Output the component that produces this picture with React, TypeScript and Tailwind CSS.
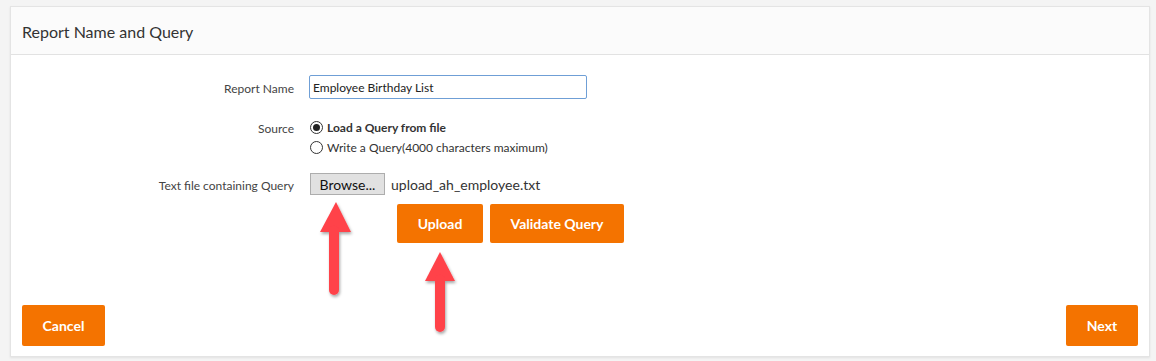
import React from "react";

function Radio({ checked }: { checked?: boolean }) {
  return (
    <span className="w-[13px] h-[13px] rounded-full border border-[#333] bg-white flex items-center justify-center shrink-0">
      {checked && <span className="w-[7px] h-[7px] rounded-full bg-[#222]" />}
    </span>
  );
}

export default function App() {
  return (
    <div
      className="relative min-h-screen h-[361px] bg-[#f4f4f4] pt-[6px] pl-[10px] overflow-hidden"
      style={{ fontFamily: "Lato, 'Open Sans', sans-serif" }}
    >
      <div className="w-[1140px] h-[351px] bg-white border border-[#e4e4e4] shadow-[0_1px_2px_rgba(0,0,0,0.08)] flex flex-col">
        <div className="h-[48px] bg-[#fbfbfb] border-b border-[#e2e2e2] flex items-center pl-[11px] pt-[3px] text-[16px] text-[#333]">
          Report Name and Query
        </div>
        <div className="flex-1 flex flex-col">
          <div className="flex items-center mt-[20px]">
            <div className="w-[283px] text-right text-[12px] text-[#444] pt-[4px]">Report Name</div>
            <div className="ml-[15px] w-[278px] h-[24px] border border-[#6f9fd6] rounded-[2px] flex items-center pl-[3px] pt-[2px] text-[12px] text-[#222]">
              Employee Birthday List
            </div>
          </div>
          <div className="flex mt-[18px]">
            <div className="w-[283px] text-right text-[12px] text-[#444] leading-[20px] pt-[2px]">Source</div>
            <div className="ml-[16px] flex flex-col text-[12px] text-[#333]">
              <label className="flex items-center gap-[4px] h-[20px] font-bold">
                <Radio checked />
                <span className="pt-[2px]">Load a Query from file</span>
              </label>
              <label className="flex items-center gap-[4px] h-[20px]">
                <Radio />
                <span className="pt-[2px]">Write a Query(4000 characters maximum)</span>
              </label>
            </div>
          </div>
          <div className="flex items-center mt-[16px]">
            <div className="w-[283px] text-right text-[12px] text-[#444] pt-[3px]">Text file containing Query</div>
            <div className="ml-[16px] w-[75px] h-[22px] bg-[#e1e1e1] border border-[#adadad] flex items-center justify-center pt-[1px] text-[14px] text-[#111]">
              Browse...
            </div>
            <span className="ml-[6px] text-[14px] text-[#333]">upload_ah_employee.txt</span>
          </div>
          <div className="flex mt-[9px] ml-[386px] gap-[7px]">
            <div className="w-[86px] h-[39px] bg-[#f47300] rounded-[2px] flex items-center justify-center text-white font-bold text-[14px]">
              Upload
            </div>
            <div className="w-[134px] h-[39px] bg-[#f47300] rounded-[2px] flex items-center justify-center text-white font-bold text-[14px]">
              Validate Query
            </div>
          </div>
          <div className="mt-auto flex justify-between pl-[11px] pr-[11px] pb-[10px]">
            <div className="w-[83px] h-[41px] bg-[#f47300] rounded-[2px] flex items-center justify-center text-white font-bold text-[14px]">
              Cancel
            </div>
            <div className="w-[72px] h-[41px] bg-[#f47300] rounded-[2px] flex items-center justify-center text-white font-bold text-[14px]">
              Next
            </div>
          </div>
        </div>
      </div>
      <svg className="absolute left-0 top-0 pointer-events-none" width="1156" height="361">
        <defs>
          <filter id="sh" x="-50%" y="-50%" width="200%" height="200%">
            <feDropShadow dx="1" dy="2" stdDeviation="1.6" floodColor="#000" floodOpacity="0.35" />
          </filter>
        </defs>
        <g filter="url(#sh)" fill="#ff424a" stroke="#ff424a">
          <polygon points="336,202 320,232 351,232" stroke="none" />
          <line x1="334" y1="230" x2="334" y2="290" strokeWidth="10" strokeLinecap="round" />
          <polygon points="440,252 425,281 455,281" stroke="none" />
          <line x1="440" y1="279" x2="440" y2="327" strokeWidth="10" strokeLinecap="round" />
        </g>
      </svg>
    </div>
  );
}
